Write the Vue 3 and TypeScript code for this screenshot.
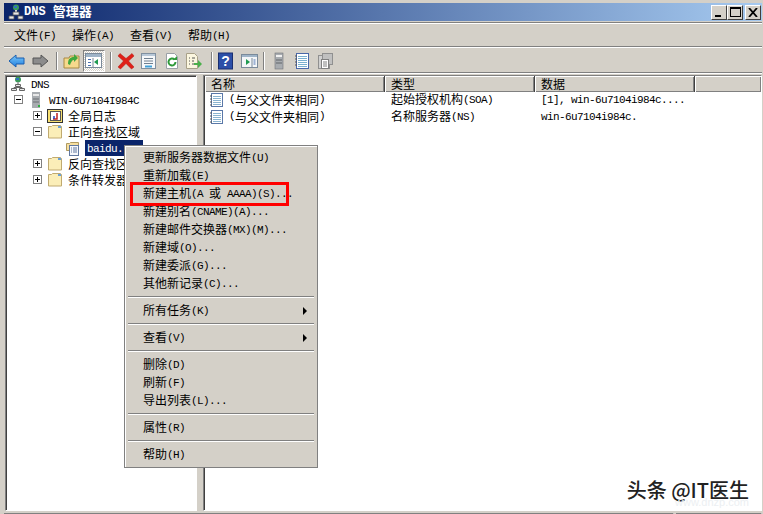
<template>
  <div class="win">
    <div class="titlebar">
      <svg class="ticon" width="16" height="16" viewBox="0 0 16 16">
        <circle cx="8" cy="3.5" r="3" fill="#3a9a5a" />
        <path d="M6 2h3v2H6z" fill="#2f6fc0" />
        <path d="M7 6h2v3H7z" fill="#d8d8d8" />
        <path d="M5 8h6v3H5zM1 12h5v3H1zM10 12h5v3h-5z" fill="#e8e8e8" stroke="#555" stroke-width=".8" />
      </svg>
      <span class="ttext"><T t="DNS 管理器" /></span>
      <div class="tbtns">
        <button class="tb"><i class="b-min"></i></button>
        <button class="tb"><i class="b-max"></i></button>
        <button class="tb tb-close">
          <svg width="10" height="9" viewBox="0 0 10 9"><path d="M1 0l8 9M9 0L1 9" stroke="#000" stroke-width="1.8" fill="none" /></svg>
        </button>
      </div>
    </div>

    <div class="menubar">
      <span v-for="m in menus" :key="m" class="mitem"><T :t="m" /></span>
    </div>

    <div class="toolbar">
      <svg class="ic" width="18" height="18" viewBox="0 0 18 18">
        <defs>
          <linearGradient id="blue" x1="0" y1="0" x2="0" y2="1"><stop offset="0" stop-color="#7cc8f8" /><stop offset="1" stop-color="#1f7fe0" /></linearGradient>
        </defs>
        <path d="M1 9l7-6v3h8v6H8v3z" fill="url(#blue)" stroke="#1a5fb0" />
      </svg>
      <svg class="ic" width="18" height="18" viewBox="0 0 18 18"><path d="M17 9l-7-6v3H2v6h8v3z" fill="#8c8c8c" stroke="#555" /></svg>
      <span class="sep"></span>
      <svg class="ic near" width="18" height="18" viewBox="0 0 18 18">
        <path d="M1 6h5l1-2h9v12H1z" fill="#f6d98c" stroke="#a88a44" />
        <path d="M5 12c0-5 2-7 6-7V2l4 4-4 4V8c-2 0-3 2-4 5z" fill="#3fa83f" />
      </svg>
      <span class="pressed">
        <svg width="18" height="16" viewBox="0 0 18 16">
          <rect x=".5" y=".5" width="16" height="14" fill="#fff" stroke="#7a8a9a" />
          <rect x="1" y="1" width="15" height="3" fill="#9fb4c8" />
          <rect x="3" y="6" width="3" height="1" fill="#4a70b0" /><rect x="3" y="9" width="3" height="1" fill="#4a70b0" /><rect x="3" y="12" width="3" height="1" fill="#4a70b0" />
          <path d="M8 5v9" stroke="#7a8a9a" /><path d="M13 6v6l-4-3z" fill="#1f9a50" />
        </svg>
      </span>
      <span class="sep"></span>
      <svg class="ic" width="18" height="18" viewBox="0 0 18 18"><path d="M3 1.500l6 5 6-5 2 2.500-5.500 5 5.500 6-2.500 2-5.500-5.500-5.500 5.500-2.500-2 5.500-6-5.500-5z" fill="#e02018" stroke="#b01810" stroke-width=".5" /></svg>
      <svg class="ic" width="18" height="18" viewBox="0 0 18 18">
        <rect x="1.500" y="1.500" width="14" height="15" fill="#f6f8fa" stroke="#8090a0" />
        <rect x="2" y="2" width="13" height="2" fill="#b8c8d8" />
        <path d="M4 6.500h9M4 9h9M4 11.500h9" stroke="#708090" /><path d="M5 14.500h7" stroke="#3fa0d8" stroke-width="2" />
      </svg>
      <svg class="ic" width="18" height="18" viewBox="0 0 18 18">
        <path d="M3.500 1.500h8l3 3v12h-11z" fill="#fff" stroke="#9aa0a6" />
        <path d="M12.500 10a3.500 3.500 0 1 1-1-2.500" fill="none" stroke="#2f9a3a" stroke-width="2" /><path d="M10 8h4V4z" fill="#2f9a3a" />
      </svg>
      <svg class="ic" width="18" height="18" viewBox="2 0 18 18">
        <path d="M2.500 1.500h8l3 3v12h-11z" fill="#fbf6df" stroke="#a8a088" />
        <path d="M5 6h1M8 6h3M5 9h1M8 9h2M5 12h1M8 12h2" stroke="#555" />
        <path d="M10 11h4V8l4 4-4 4v-3h-4z" fill="#4ab04a" />
      </svg>
      <span class="sep"></span>
      <svg class="ic" width="18" height="18" viewBox="0 0 18 18">
        <rect x=".5" y="1" width="14" height="16" fill="#2c4fa8" stroke="#1a2f70" />
        <text x="7.500" y="14" class="qm">?</text>
      </svg>
      <svg class="ic near" width="18" height="18" viewBox="0 0 18 18">
        <rect x=".5" y="2.500" width="16" height="13" fill="#f4f6f8" stroke="#7a8a9a" />
        <rect x="1" y="3" width="15" height="2" fill="#9fb4c8" />
        <path d="M5 7v6l4-3z" fill="#1f9a50" /><path d="M11 6v9" stroke="#7a8a9a" />
        <path d="M12.500 8h2M12.500 10h2M12.500 12h2" stroke="#4a70b0" />
      </svg>
      <span class="sep"></span>
      <svg class="ic" width="18" height="18" viewBox="0 0 18 18">
        <rect x="5" y="1" width="8" height="16" fill="#a8acb0" stroke="#707478" stroke-width=".6" />
        <rect x="6" y="3" width="6" height="2" fill="#f0f0f0" /><path d="M6 8h6M6 11h6" stroke="#606468" />
      </svg>
      <svg class="ic" width="18" height="18" viewBox="0 0 18 18">
        <rect x="3.500" y="1.500" width="12" height="15" fill="#fff" stroke="#4a68a8" />
        <path d="M5 4.500h9M5 6.500h9M5 8.500h9M5 10.500h9M5 12.500h9M5 14.500h9" stroke="#7ab0d0" />
        <path d="M2 4h2M2 7h2M2 10h2M2 13h2" stroke="#555" />
      </svg>
      <svg class="ic" width="18" height="18" viewBox="0 0 18 18">
        <rect x="2.500" y="3.500" width="11" height="13" fill="#d0d0d0" stroke="#909090" />
        <rect x="6.500" y="1.500" width="10" height="11" fill="#c0c0c0" stroke="#909090" />
        <rect x="5.500" y="7.500" width="7" height="9" fill="#fff" stroke="#808080" />
        <path d="M7 10h4M7 12h4M7 14h4" stroke="#808080" />
      </svg>
    </div>

    <div class="panes">
      <div class="tree">
        <div v-for="r in treeRows" :key="r.text" class="row" :class="'lv' + r.level">
          <span v-if="r.toggle" class="toggle">
            <i class="hz"></i><i v-if="r.toggle === '+'" class="vt"></i>
          </span>
          <svg v-if="r.icon === 'dns'" class="ti" width="16" height="16" viewBox="0 0 16 16">
            <circle cx="8" cy="3.500" r="3" fill="#3a9a5a" /><path d="M6 2h3v2H6z" fill="#2f6fc0" />
            <path d="M7 6h2v3H7z" fill="#aaa" />
            <path d="M5.500 8.500h5v2h-5zM1.500 12.500h5v2h-5zM9.500 12.500h5v2h-5z" fill="#e8e8e8" stroke="#666" />
            <path d="M8 10.500v1M4 11.500h8v1M4 11.500v1" stroke="#666" fill="none" />
          </svg>
          <svg v-else-if="r.icon === 'server'" class="ti" width="16" height="16" viewBox="0 0 16 16">
            <rect x="4" y="0" width="8" height="16" fill="#a8acb0" />
            <rect x="5" y="2" width="6" height="2" fill="#e8e8e8" /><path d="M5 7h6M5 10h6" stroke="#6a6e72" />
            <rect x="10" y="13" width="2" height="2" fill="#2fb040" />
          </svg>
          <svg v-else-if="r.icon === 'log'" class="ti" width="16" height="16" viewBox="0 0 16 16">
            <rect x=".5" y="1.500" width="15" height="13" fill="#f8e070" stroke="#333" />
            <rect x="3.500" y="3.500" width="10" height="9" fill="#fff" stroke="#555" />
            <path d="M10 5v6H6" fill="none" stroke="#c02020" stroke-width="1.500" /><path d="M7 8v3" stroke="#2040c0" stroke-width="1.500" />
          </svg>
          <svg v-else-if="r.icon === 'zone'" class="ti" width="16" height="16" viewBox="1 0 16 16">
            <path d="M1.500 3.500h3l1-1h8v8h-12z" fill="#f6dfa0" stroke="#b09a60" />
            <rect x="4.500" y="5.500" width="9" height="10" fill="#f6f8fc" stroke="#6078a0" />
            <path d="M6 8h1M8 8h4M6 10h1M8 10h4M6 12h1M8 12h4" stroke="#6078a0" />
          </svg>
          <svg v-else class="ti" width="16" height="16" viewBox="0 0 16 16">
            <path d="M1.500 2.500h3l1-1h8l1 1v11.500h-13z" fill="#fbeeb8" stroke="#c0aa70" />
            <rect x="11" y="2" width="3" height="2" fill="#6aa0d8" />
          </svg>
          <span class="label" :class="{ sel: r.selected }"><T :t="r.text" /></span>
        </div>
      </div>
      <div class="split"></div>
      <div class="list">
        <div class="lhead">
          <span v-for="c in columns" :key="c.name" class="lh" :style="{ width: c.width + 'px' }"><T :t="c.name" /></span>
          <span class="lh lh-fill"></span>
        </div>
        <div v-for="r in records" :key="r.type" class="lrow">
          <span class="lc lc1">
            <svg class="ti" width="16" height="16" viewBox="2 0 16 16">
              <rect x="3.500" y="1.500" width="11" height="13" fill="#fff" stroke="#5a78a8" />
              <path d="M5 4.500h8M5 6.500h8M5 8.500h8M5 10.500h8M5 12.500h8" stroke="#8ab4d0" />
              <path d="M2 4h2M2 7h2M2 10h2M2 13h2" stroke="#555" />
            </svg>
            <T :t="r.name" />
          </span>
          <span class="lc lc2"><T :t="r.type" /></span>
          <span class="lc"><T :t="r.data" /></span>
        </div>
        <div class="mark">
          <span class="mark-main">头条 @IT医生</span>
          <span class="mark-sub">www.dnzp.com</span>
        </div>
      </div>
    </div>
    <div class="status">
      <span class="st st1"></span><span class="st st2"></span>
    </div>

    <div class="ctx">
      <template v-for="(it, i) in ctxItems" :key="i">
        <div v-if="it === '-'" class="ctx-sep"></div>
        <div v-else class="ctx-item">
          <T :t="it.replace('>', '')" />
          <i v-if="it.endsWith('>')" class="arrow"></i>
        </div>
      </template>
      <div class="redbox"></div>
    </div>
  </div>
</template>

<script setup lang="ts">
import { h } from 'vue'

// SimSun look: latin glyphs are half the width of the CJK ones
const T = (props: { t: string }) =>
  props.t
    .split(/([\x00-\x7f]+)/)
    .filter(Boolean)
    .map((s) => h('span', { class: /^[\x00-\x7f]/.test(s) ? 'lat' : 'cjk' }, s))
T.props = ['t']

interface TreeRow {
  text: string
  level: number
  icon: string
  toggle?: string
  selected?: boolean
}

const menus = ['文件(F)', '操作(A)', '查看(V)', '帮助(H)']

const treeRows: TreeRow[] = [
  { text: 'DNS', level: 0, icon: 'dns' },
  { text: 'WIN-6U7104I984C', level: 1, icon: 'server', toggle: '-' },
  { text: '全局日志', level: 2, icon: 'log', toggle: '+' },
  { text: '正向查找区域', level: 2, icon: 'folder', toggle: '-' },
  { text: 'baidu.', level: 3, icon: 'zone', selected: true },
  { text: '反向查找区域', level: 2, icon: 'folder', toggle: '+' },
  { text: '条件转发器', level: 2, icon: 'folder', toggle: '+' },
]

const columns = [
  { name: '名称', width: 180 },
  { name: '类型', width: 150 },
  { name: '数据', width: 160 },
]

const records = [
  { name: '(与父文件夹相同)', type: '起始授权机构(SOA)', data: '[1], win-6u7104i984c....' },
  { name: '(与父文件夹相同)', type: '名称服务器(NS)', data: 'win-6u7104i984c.' },
]

const ctxItems = [
  '更新服务器数据文件(U)',
  '重新加载(E)',
  '新建主机(A 或 AAAA)(S)...',
  '新建别名(CNAME)(A)...',
  '新建邮件交换器(MX)(M)...',
  '新建域(O)...',
  '新建委派(G)...',
  '其他新记录(C)...',
  '-',
  '所有任务(K)>',
  '-',
  '查看(V)>',
  '-',
  '删除(D)',
  '刷新(F)',
  '导出列表(L)...',
  '-',
  '属性(R)',
  '-',
  '帮助(H)',
]
</script>

<style>
html,
body {
  margin: 0;
  overflow: hidden;
}
.lat {
  position: relative;
  top: -1px;
  font-family: 'Liberation Mono', monospace;
  font-size: 11px;
  letter-spacing: -0.6px;
}
.cjk {
  font-family: 'Noto Sans CJK SC', sans-serif;
  font-size: 12px;
}
.ttext .lat {
  font-size: 12px;
  letter-spacing: 0;
}
.ttext .cjk {
  font-size: 13px;
}
</style>

<style scoped>
.win {
  position: relative;
  width: 763px;
  height: 514px;
  box-sizing: border-box;
  padding: 3px 1px 0 4px;
  background: #d4d0c8;
  color: #000;
  overflow: hidden;
  line-height: 16px;
  white-space: pre;
}
.titlebar {
  height: 18px;
  display: flex;
  align-items: center;
  background: linear-gradient(90deg, #0a246a, #a6caf0);
  color: #fff;
  padding: 0 1px 0 4px;
}
.ticon {
  flex: none;
}
.ttext {
  font-weight: bold;
}
.tbtns {
  margin-left: auto;
  display: flex;
}
.tb {
  width: 16px;
  height: 15px;
  padding: 0;
  margin: 0;
  display: flex;
  align-items: center;
  justify-content: center;
  position: relative;
  background: #d4d0c8;
  border: 1px solid;
  border-color: #fff #404040 #404040 #fff;
}
.tb-close {
  margin-left: 2px;
}
.b-min {
  position: absolute;
  left: 3px;
  bottom: 2px;
  width: 6px;
  height: 2px;
  background: #000;
}
.b-max {
  width: 9px;
  height: 7px;
  border: 1px solid #000;
  border-top-width: 2px;
}
.menubar {
  height: 21px;
  margin-top: 1px;
  padding: 2px 0 0 10px;
  display: flex;
  align-items: center;
  border-top: 1px solid #808080;
  border-bottom: 1px solid #808080;
  box-shadow: inset 0 1px 0 #fff, 0 1px 0 #fff;
}
.mitem {
  width: 58px;
}
.toolbar {
  height: 22px;
  margin-top: 2px;
  padding: 1px 0 0 4px;
  display: flex;
  align-items: center;
  border-bottom: 1px solid #808080;
  box-shadow: 0 1px 0 #fff;
}
.ic {
  margin-right: 5px;
  flex: none;
}
.near {
  margin-right: 2px;
}
.sep {
  width: 1px;
  height: 18px;
  margin: 0 6px 0 2px;
  background: #808080;
  box-shadow: 1px 0 0 #fff;
}
.pressed {
  width: 22px;
  height: 22px;
  box-sizing: border-box;
  display: flex;
  align-items: center;
  justify-content: center;
  margin-right: 3px;
  border: 1px solid;
  border-color: #808080 #fff #fff #808080;
  background: repeating-conic-gradient(#fff 0 25%, #d4d0c8 0 50%) 0 0 / 2px 2px;
}
.qm {
  font-family: 'Liberation Sans', sans-serif;
  font-size: 14px;
  font-weight: bold;
  fill: #fff;
  text-anchor: middle;
}
.panes {
  display: flex;
  height: 436px;
  margin-top: 2px;
}
.tree {
  width: 192px;
  margin-left: 1px;
  box-sizing: border-box;
  background: #fff;
  border: 1px solid;
  border-color: #808080 #fff #fff #808080;
  box-shadow: inset 1px 1px 0 #404040;
}
.split {
  width: 6px;
}
.row {
  height: 16px;
  display: flex;
  align-items: center;
  position: relative;
}
.lv0 {
  padding-left: 4px;
}
.lv1 {
  padding-left: 22px;
}
.lv2 {
  padding-left: 41px;
}
.lv3 {
  padding-left: 60px;
}
.toggle {
  position: absolute;
  top: 3px;
  width: 9px;
  height: 9px;
  box-sizing: border-box;
  border: 1px solid #808080;
  background: #fff;
}
.lv1 .toggle {
  left: 8px;
}
.lv2 .toggle {
  left: 27px;
}
.hz {
  position: absolute;
  left: 1px;
  top: 3px;
  width: 5px;
  height: 1px;
  background: #000;
}
.vt {
  position: absolute;
  left: 3px;
  top: 1px;
  width: 1px;
  height: 5px;
  background: #000;
}
.ti {
  flex: none;
  margin-right: 3px;
}
.label {
  padding: 0 2px;
  height: 16px;
}
.sel {
  background: #0a246a;
  color: #fff;
  padding-right: 20px;
}
.list {
  flex: 1;
  position: relative;
  background: #fff;
  border: 1px solid;
  border-color: #808080 #fff #fff #808080;
  box-shadow: inset 1px 1px 0 #404040;
}
.lhead {
  display: flex;
  height: 16px;
  margin: 0 0 -1px 1px;
  background: #d4d0c8;
}
.lh {
  box-sizing: border-box;
  padding-left: 6px;
  height: 16px;
  overflow: hidden;
  border-right: 1px solid #404040;
  box-shadow: inset 1px 1px 0 #fff, inset -1px -1px 0 #808080;
  flex: none;
}
.lh-fill {
  flex: 1;
  border-right: 0;
}
.lrow {
  height: 17px;
  display: flex;
  align-items: center;
}
.lc1 {
  width: 181px;
  padding-left: 6px;
  box-sizing: border-box;
  display: flex;
  align-items: center;
}
.lc2 {
  width: 150px;
  padding-left: 6px;
  box-sizing: border-box;
}
.lc {
  padding-left: 6px;
}
.mark {
  position: absolute;
  right: 12px;
  bottom: 2px;
  text-align: right;
}
.mark-main {
  display: block;
  font-family: 'Noto Sans CJK SC', sans-serif;
  font-size: 20px;
  font-weight: 500;
  line-height: 24px;
  color: #222;
  text-shadow: 0 0 2px #fff;
}
.mark-sub {
  display: block;
  margin-top: -6px;
  font-family: 'Liberation Sans', sans-serif;
  font-size: 11px;
  line-height: 12px;
  color: #eceff2;
}
.status {
  display: flex;
  gap: 2px;
  margin-top: 2px;
  height: 20px;
}
.st {
  border: 1px solid;
  border-color: #808080 #fff #fff #808080;
}
.st1 {
  flex: 1;
}
.st2 {
  width: 84px;
}
.ctx {
  position: absolute;
  left: 124px;
  top: 145px;
  width: 194px;
  box-sizing: border-box;
  padding: 3px 2px;
  background: #d4d0c8;
  border: 1px solid #808080;
  box-shadow: inset 1px 1px 0 #fff;
}
.ctx-item {
  height: 18px;
  line-height: 15px;
  padding-left: 16px;
  position: relative;
}
.ctx-sep {
  height: 1px;
  margin: 3px 1px 4px;
  background: #808080;
  border-bottom: 1px solid #fff;
}
.arrow {
  position: absolute;
  right: 8px;
  top: 5px;
  border-left: 4px solid #000;
  border-top: 4px solid transparent;
  border-bottom: 4px solid transparent;
}
.redbox {
  position: absolute;
  left: 5px;
  top: 36px;
  width: 159px;
  height: 24px;
  box-sizing: border-box;
  border: 3px solid #f00;
}
</style>
